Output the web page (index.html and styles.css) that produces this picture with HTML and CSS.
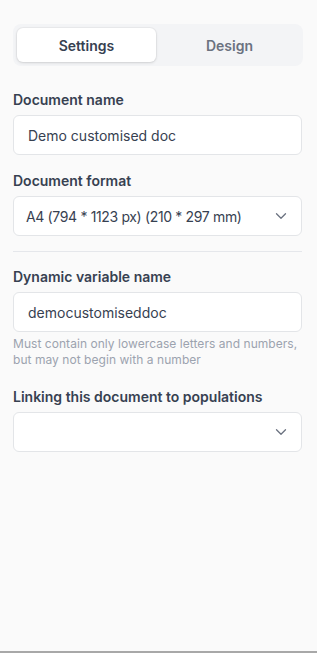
FILE: index.html
```html
<!DOCTYPE html>
<html>
<head>
<meta charset="utf-8">
<link rel="stylesheet" href="styles.css">
</head>
<body>
<div class="page">
  <div class="tabs">
    <div class="tab active">Settings</div>
    <div class="tab">Design</div>
  </div>
  <div class="field first">
    <div class="label">Document name</div>
    <div class="input">Demo customised doc</div>
  </div>
  <div class="field">
    <div class="label">Document format</div>
    <div class="input select">
      <span class="tight">A4 (794 * 1123 px) (210 * 297 mm)</span>
      <svg class="chev" width="12" height="8" viewBox="0 0 12 8"><path d="M1.5 1.8 L6 6.2 L10.5 1.8" fill="none" stroke="#6b7280" stroke-width="1.3" stroke-linecap="round" stroke-linejoin="round"/></svg>
    </div>
  </div>
  <div class="divider"></div>
  <div class="field after-divider">
    <div class="label">Dynamic variable name</div>
    <div class="input">democustomiseddoc</div>
    <div class="help">Must contain only lowercase letters and numbers, but may not begin with a number</div>
  </div>
  <div class="field after-help">
    <div class="label">Linking this document to populations</div>
    <div class="input select">
      <span></span>
      <svg class="chev" width="12" height="8" viewBox="0 0 12 8"><path d="M1.5 1.8 L6 6.2 L10.5 1.8" fill="none" stroke="#6b7280" stroke-width="1.3" stroke-linecap="round" stroke-linejoin="round"/></svg>
    </div>
  </div>
</div>
</body>
</html>
```
FILE: styles.css
```css
* { box-sizing: border-box; }
html, body { margin: 0; padding: 0; }
body {
  width: 317px;
  height: 653px;
  background: #fafafa;
  font-family: Inter, "Noto Sans", sans-serif;
  color: #374151;
  border-bottom: 2px solid #a8a8a8;
  overflow: hidden;
}
.page {
  padding: 24px 15px 0 13px;
  display: flex;
  flex-direction: column;
}
.tabs {
  display: flex;
  gap: 4px;
  height: 42px;
  padding: 4px;
  background: #f3f4f6;
  border-radius: 8px;
  margin-right: -1px;
}
.tab {
  flex: 1;
  display: flex;
  align-items: center;
  justify-content: center;
  font-size: 14px;
  font-weight: 600;
  color: #6b7280;
  border-radius: 6px;
}
.tab.active {
  background: #ffffff;
  color: #374151;
  box-shadow: 0 1px 3px rgba(0,0,0,0.12), 0 0 0 1px rgba(0,0,0,0.03);
}
.field {
  display: flex;
  flex-direction: column;
  margin-top: 16px;
}
.field.first { margin-top: 24px; }
.field.after-divider { margin-top: 15px; }
.field.after-help { margin-top: 19px; }
.label {
  font-size: 14px;
  font-weight: 600;
  line-height: 20px;
  color: #374151;
  margin-bottom: 5px;
}
.input {
  height: 40px;
  background: #ffffff;
  border: 1px solid #e3e5e8;
  border-radius: 6px;
  padding: 0 14px;
  display: flex;
  align-items: center;
  font-size: 14px;
  color: #374151;
}
.select {
  padding: 0 14px 0 12px;
  justify-content: space-between;
}
.tight { letter-spacing: -0.35px; }
.divider {
  height: 1px;
  background: #e5e7eb;
  margin-top: 15px;
}
.help {
  margin-top: 4px;
  font-size: 12px;
  line-height: 16px;
  letter-spacing: 0.05px;
  color: #9ca3af;
}
```
